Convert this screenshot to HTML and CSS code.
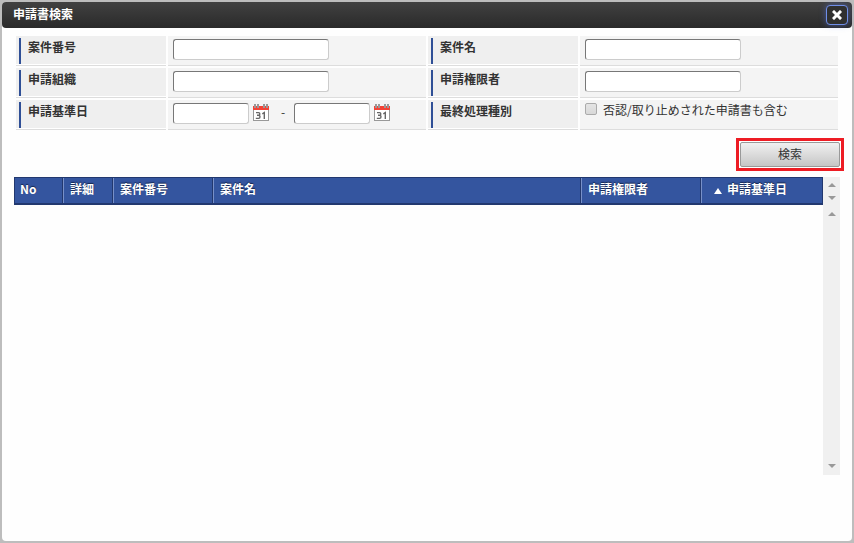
FILE: index.html
```html
<!DOCTYPE html>
<html lang="ja">
<head>
<meta charset="utf-8">
<title>申請書検索</title>
<link rel="stylesheet" href="styles.css">
</head>
<body>
<svg class="defs" aria-hidden="true">
  <symbol id="calendar" viewBox="0 0 16 17">
    <path fill="#999" d="M0 5h16v12H0z"/>
    <path fill="#fff" d="M1 6h14v10H1z"/>
    <path fill="#f44336" d="M0 2h16v4H0z"/>
    <path fill="#999" d="M1 0h2v4H1zM4 0h2v4H4zM10 0h2v4h-2zM13 0h2v4h-2z"/>
    <path fill="none" stroke="#666" stroke-width="1.4" d="M3 8.600h2.600q1.200 0 1.200 1.300t-1.200 1.400H4M5.600 11.300q1.400 0 1.400 1.500T5.600 14.400H2.800M9.300 9.800L11.300 8.600V15"/>
  </symbol>
</svg>
<main class="dialog">
  <header class="titlebar">
    <h1>申請書検索</h1>
    <button class="close" type="button" aria-label="閉じる">
      <svg viewBox="0 0 10 10" width="10" height="10"><path d="M2 2l6 6M8 2L2 8" stroke="#fff" stroke-width="3" stroke-linecap="square"/></svg>
    </button>
  </header>
  <form class="search">
    <div class="fields">
      <div class="name"><label for="no">案件番号</label></div>
      <div class="value"><input class="text" id="no" type="text"></div>
      <div class="name"><label for="title">案件名</label></div>
      <div class="value"><input class="text" id="title" type="text"></div>
      <div class="name"><label for="org">申請組織</label></div>
      <div class="value"><input class="text" id="org" type="text"></div>
      <div class="name"><label for="person">申請権限者</label></div>
      <div class="value"><input class="text" id="person" type="text"></div>
      <div class="name"><label for="from">申請基準日</label></div>
      <div class="value">
        <input class="text date" id="from" type="text">
        <button class="pick" type="button" aria-label="開始日"><svg><use href="#calendar"/></svg></button>
        <span class="dash">-</span>
        <input class="text date" type="text" aria-label="終了日">
        <button class="pick" type="button" aria-label="終了日を選択"><svg><use href="#calendar"/></svg></button>
      </div>
      <div class="name"><span>最終処理種別</span></div>
      <div class="value"><label class="check"><input type="checkbox">否認/取り止めされた申請書も含む</label></div>
    </div>
    <div class="actions"><div class="highlight"><button class="submit" type="button">検索</button></div></div>
  </form>
  <section class="results">
    <table>
      <thead>
        <tr>
          <th class="first">No</th>
          <th class="detail">詳細</th>
          <th class="number">案件番号</th>
          <th>案件名</th>
          <th class="person">申請権限者</th>
          <th class="day"><svg viewBox="0 0 8 6" width="8" height="6"><path fill="#fff" d="M4 0l4 6H0z"/></svg>申請基準日</th>
        </tr>
      </thead>
      <tbody></tbody>
    </table>
    <div class="rail">
      <div class="track head"><i class="up"></i><i class="down"></i></div>
      <div class="track"><i class="up"></i><i class="down"></i></div>
    </div>
  </section>
</main>
</body>
</html>
```
FILE: styles.css
```css
* { box-sizing: border-box; }
body {
  margin: 0;
  background: #bdbdbd;
  color: #333;
  font: 12px/16px "Noto Sans CJK JP", sans-serif;
}
button, input { font: inherit; color: inherit; margin: 0; }
.defs { display: none; }
.dialog {
  min-height: calc(100vh - 4px);
  margin: 2px;
  background: #fefefe;
  border-radius: 4px;
}
.titlebar {
  display: flex;
  align-items: center;
  justify-content: space-between;
  height: 26px;
  padding: 0 4px 0 11px;
  border-radius: 4px;
  background: linear-gradient(#414141, #2a2a2a);
  color: #fff;
}
h1 { margin: 0; font-size: 12px; line-height: 16px; padding-bottom: 3px; }
.close {
  display: flex;
  align-items: center;
  justify-content: center;
  width: 22px;
  height: 20px;
  padding: 0;
  border: 1px solid #6f8ee8;
  border-radius: 4px;
  background: #303030;
  box-shadow: 0 0 6px rgba(90, 120, 240, .5);
}
.search { padding: 8px 14px 0; }
.fields {
  display: grid;
  grid-template-columns: 150px 1fr 150px 1fr;
  gap: 2px;
}
.name, .value { height: 30px; border-bottom: 1px solid #ddd; }
.name {
  padding: 2px 0 1px 3px;
  background: linear-gradient(#efefef 28px, #fff 28px);
  font-weight: bold;
}
.name > * {
  display: block;
  height: 26px;
  padding: 1px 0 0 7px;
  border-left: 2px solid #2f4f96;
}
.value {
  display: flex;
  align-items: flex-start;
  padding: 3px 5px 0;
  background: #f4f4f4;
}
.text {
  width: 156px;
  height: 21px;
  padding: 0 4px;
  border: 1px solid #ccc;
  border-top-color: #777;
  border-left-color: #777;
  border-radius: 3px;
  background: #fff;
}
.date { width: 76px; }
.pick {
  width: 16px;
  height: 17px;
  margin: 1px 0 0 4px;
  padding: 0;
  border: 0;
  background: none;
}
.pick svg { display: block; width: 16px; height: 17px; }
.dash { width: 25px; padding: 1px 0 0 3px; text-align: center; }
.check { display: flex; gap: 6px; line-height: 14px; }
.check input {
  appearance: none;
  width: 12px;
  height: 12px;
  border: 1px solid #aaa;
  border-radius: 2px;
  background: linear-gradient(#e4e4e4, #d8d8d8);
}
.actions { display: flex; justify-content: flex-end; margin: 8px -6px 6px 0; }
.highlight { padding: 1px; border: 3px solid #ed1c24; background: #fff; }
.submit {
  display: block;
  width: 100px;
  height: 25px;
  padding: 0 0 1px;
  border: 1px solid #999;
  border-radius: 2px;
  background: linear-gradient(#f0f0f0, #c6c6c6);
}
.results { display: flex; align-items: flex-start; padding: 0 12px; }
table {
  flex: 1;
  table-layout: fixed;
  border-collapse: separate;
  border-spacing: 0;
  border: 1px solid #22386f;
  border-bottom-width: 2px;
  background: #34559f;
}
th {
  height: 25px;
  padding: 0 0 3px 6px;
  border-left: 1px solid #7890c8;
  border-right: 1px solid #22386f;
  text-align: left;
  color: #fff;
  text-shadow: 0 -1px 1px #14264f;
}
.first { width: 48px; padding-left: 5px; border-left: 0; }
.detail { width: 50px; }
.number { width: 100px; }
.person { width: 120px; }
.day { width: 121px; padding-left: 12px; border-right: 0; }
.day svg { margin-right: 5px; }
.rail { width: 17px; background: #f0f0f0; }
.track {
  display: flex;
  flex-direction: column;
  justify-content: space-between;
  align-items: center;
  height: 270px;
  padding: 7px 0;
}
.track.head { height: 28px; padding: 6px 0 5px; }
.up, .down { border: 4px solid transparent; border-top-width: 0; border-bottom-color: #999; }
.down { border-width: 4px 4px 0; border-top-color: #999; }
```
